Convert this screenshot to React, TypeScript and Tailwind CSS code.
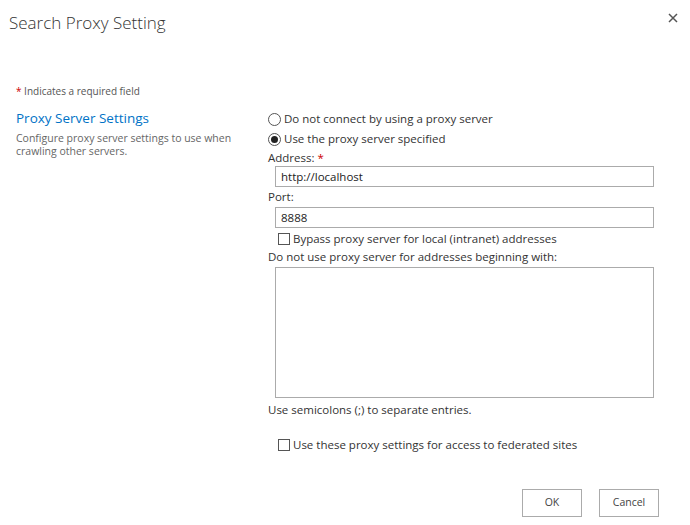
import React from 'react';

const font = { fontFamily: '"Open Sans", "Noto Sans", sans-serif' };

const Radio = ({ checked }: { checked?: boolean }) => (
  <span className="inline-flex h-[13px] w-[13px] shrink-0 items-center justify-center rounded-full border border-[#555] bg-white">
    {checked && <span className="h-[7px] w-[7px] rounded-full bg-[#222]" />}
  </span>
);

const Check = () => (
  <span className="inline-block h-[12px] w-[12px] shrink-0 border border-[#555] bg-white" />
);

export default function App() {
  return (
    <div
      className="relative h-[525px] w-[690px] overflow-hidden bg-white text-[11.5px] text-[#444]"
      style={font}
    >
      <div className="flex items-start justify-between pl-[9px] pr-[12px] pt-[10px]">
        <h1 className="text-[17px] font-light leading-[26px] text-[#333]">Search Proxy Setting</h1>
        <button className="mt-[3px] text-[#555]">
          <svg width="10" height="10" viewBox="0 0 10 10">
            <path d="M1 1 L9 9 M9 1 L1 9" stroke="currentColor" strokeWidth="1.5" />
          </svg>
        </button>
      </div>

      <div className="mt-[48px] pl-[16px] text-[10px] leading-[14px] text-[#555]">
        <span className="text-[#c00]">*</span> Indicates a required field
      </div>

      <div className="mt-[10px] flex">
        <div className="w-[268px] pl-[16px]">
          <div className="text-[13.5px] leading-[20px] text-[#0072c6]">Proxy Server Settings</div>
          <div className="mt-[4px] w-[240px] text-[10.5px] leading-[13px] text-[#666]">
            Configure proxy server settings to use when crawling other servers.
          </div>
        </div>

        <div className="w-[386px] pt-[1px]">
          <label className="flex h-[20px] items-center gap-[3px] text-[#333]">
            <Radio />
            <span>Do not connect by using a proxy server</span>
          </label>
          <label className="flex h-[20px] items-center gap-[3px] text-[#333]">
            <Radio checked />
            <span>Use the proxy server specified</span>
          </label>
          <div className="flex h-[17px] items-center text-[#333]">
            Address:<span className="ml-[3px] text-[#c00]">*</span>
          </div>
          <div className="ml-[7px] flex h-[21px] items-center border border-[#ababab] px-[5px] text-[#222]">
            http://localhost
          </div>
          <div className="flex h-[20px] items-center text-[#333]">Port:</div>
          <div className="ml-[7px] flex h-[21px] items-center border border-[#ababab] px-[5px] text-[#222]">
            8888
          </div>
          <label className="flex h-[21px] items-center gap-[3px] pl-[10px] text-[#333]">
            <Check />
            <span>Bypass proxy server for local (intranet) addresses</span>
          </label>
          <div className="flex h-[16px] items-center text-[#333]">
            Do not use proxy server for addresses beginning with:
          </div>
          <div className="ml-[7px] mt-[2px] h-[131px] border border-[#ababab]" />
          <div className="mt-[3px] text-[#333]">Use semicolons (;) to separate entries.</div>
          <label className="mt-[18px] flex items-center gap-[3px] pl-[10px] text-[#333]">
            <Check />
            <span>Use these proxy settings for access to federated sites</span>
          </label>
        </div>
      </div>

      <div className="mt-[35px] flex justify-end gap-[17px] pr-[31px]">
        <button className="flex h-[28px] w-[60px] items-center justify-center border border-[#ababab] text-[10.5px] text-[#444]">
          OK
        </button>
        <button className="flex h-[28px] w-[60px] items-center justify-center border border-[#ababab] text-[10.5px] text-[#444]">
          Cancel
        </button>
      </div>
    </div>
  );
}
